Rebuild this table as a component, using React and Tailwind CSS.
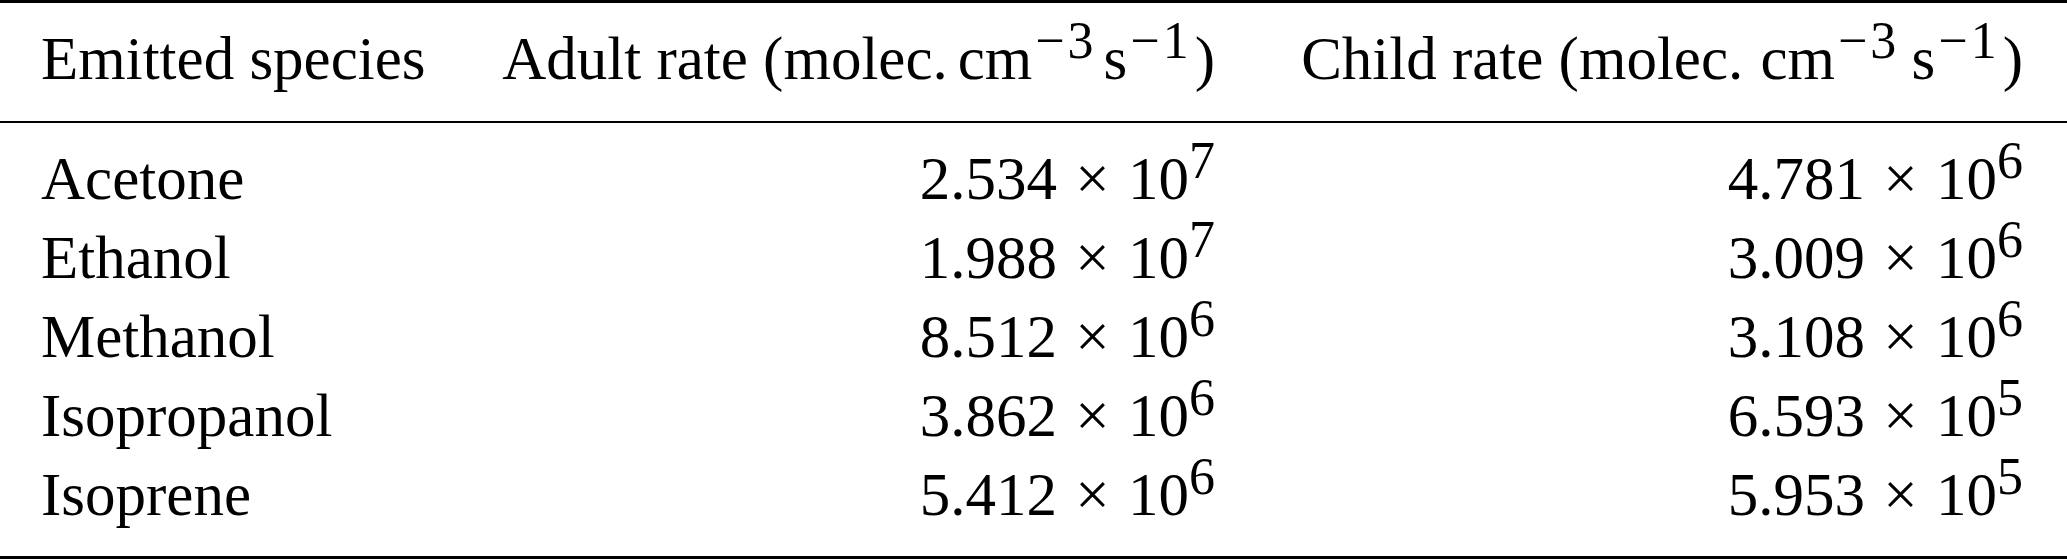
import React from "react";

const rows = [
  { name: "Acetone", adult: ["2.534", "7"], child: ["4.781", "6"] },
  { name: "Ethanol", adult: ["1.988", "7"], child: ["3.009", "6"] },
  { name: "Methanol", adult: ["8.512", "6"], child: ["3.108", "6"] },
  { name: "Isopropanol", adult: ["3.862", "6"], child: ["6.593", "5"] },
  { name: "Isoprene", adult: ["5.412", "6"], child: ["5.953", "5"] },
];

const Sup = ({ children, className = "" }) => (
  <sup className={`text-[52px] leading-[0] align-super top-0 ${className}`}>
    {children}
  </sup>
);

const Neg = ({ n }) => (
  <Sup className="ml-[3px]">
    <span className="mr-[3px]">−</span>
    {n}
  </Sup>
);

const Sci = ({ value }) => (
  <span>
    {value[0]} <span className="mx-[3px]">×</span> 10
    <Sup>{value[1]}</Sup>
  </span>
);

export default function App() {
  return (
    <div
      className="w-[2067px] h-[560px] bg-white text-black text-[61px] leading-[79px]"
      style={{ fontFamily: '"Liberation Serif", "Times New Roman", serif' }}
    >
      <div className="border-t-[3px] border-black" />

      {/* header */}
      <div className="grid grid-cols-[463px_794px_810px] h-[118px] pt-[16px] whitespace-nowrap">
        <div className="pl-[41px]">Emitted species</div>
        <div className="pr-[42px] text-right">
          Adult rate (molec.<span className="ml-[10px]">cm</span>
          <Neg n="3" />
          <span className="ml-[10px]">s</span>
          <Neg n="1" />
          <span className="ml-[6px]">)</span>
        </div>
        <div className="pr-[44px] text-right">
          Child rate (molec.<span className="ml-[2px]"> cm</span>
          <Neg n="3" /> s<Neg n="1" />
          <span className="ml-[6px]">)</span>
        </div>
      </div>

      <div className="border-t-[2px] border-black" />

      {/* body */}
      <div className="h-[433px] pt-[16px]">
        {rows.map((r) => (
          <div
            key={r.name}
            className="grid grid-cols-[463px_794px_810px] h-[79px] whitespace-nowrap"
          >
            <div className="pl-[41px]">{r.name}</div>
            <div className="pr-[42px] text-right">
              <Sci value={r.adult} />
            </div>
            <div className="pr-[44px] text-right">
              <Sci value={r.child} />
            </div>
          </div>
        ))}
      </div>

      <div className="border-t-[3px] border-black" />
    </div>
  );
}
